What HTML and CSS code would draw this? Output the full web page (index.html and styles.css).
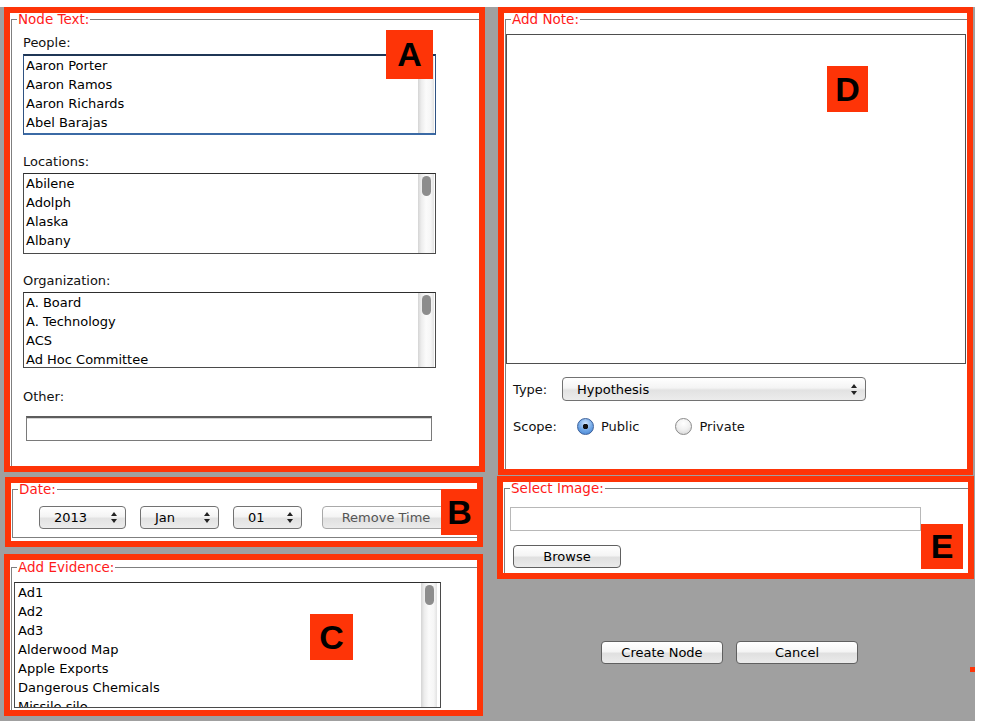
FILE: index.html
```html
<!DOCTYPE html>
<html>
<head>
<meta charset="utf-8">
<title>Create Node</title>
<link rel="stylesheet" href="styles.css">
</head>
<body>
<div class="screen">
  <div class="col-left">
    <section class="mark mark-a">
      <fieldset class="group">
        <legend>Node Text:</legend>
        <div class="lbl lbl-first">People:</div>
        <div class="list list-focus list-tall">
          <ul class="items">
            <li>Aaron Porter</li>
            <li>Aaron Ramos</li>
            <li>Aaron Richards</li>
            <li>Abel Barajas</li>
          </ul>
          <div class="sbar"><div class="thumb"></div></div>
        </div>
        <div class="lbl">Locations:</div>
        <div class="list list-tall">
          <ul class="items">
            <li>Abilene</li>
            <li>Adolph</li>
            <li>Alaska</li>
            <li>Albany</li>
          </ul>
          <div class="sbar"><div class="thumb"></div></div>
        </div>
        <div class="lbl">Organization:</div>
        <div class="list list-short">
          <ul class="items">
            <li>A. Board</li>
            <li>A. Technology</li>
            <li>ACS</li>
            <li>Ad Hoc Committee</li>
          </ul>
          <div class="sbar"><div class="thumb"></div></div>
        </div>
        <div class="lbl lbl-other">Other:</div>
        <div class="textfield textfield-other"></div>
      </fieldset>
    </section>

    <section class="mark mark-b">
      <fieldset class="group group-date">
        <legend>Date:</legend>
        <div class="date-row">
          <div class="combo combo-year"><span>2013</span><svg class="updown" viewBox="0 0 6 11" width="6" height="11"><path d="M3 0 L6 4 H0 Z M0 7 H6 L3 11 Z"/></svg></div>
          <div class="combo combo-month"><span>Jan</span><svg class="updown" viewBox="0 0 6 11" width="6" height="11"><path d="M3 0 L6 4 H0 Z M0 7 H6 L3 11 Z"/></svg></div>
          <div class="combo combo-day"><span>01</span><svg class="updown" viewBox="0 0 6 11" width="6" height="11"><path d="M3 0 L6 4 H0 Z M0 7 H6 L3 11 Z"/></svg></div>
          <div class="btn btn-disabled btn-remove">Remove Time</div>
        </div>
      </fieldset>
    </section>

    <section class="mark mark-c">
      <fieldset class="group group-evidence">
        <legend>Add Evidence:</legend>
        <div class="list list-evidence">
          <ul class="items">
            <li>Ad1</li>
            <li>Ad2</li>
            <li>Ad3</li>
            <li>Alderwood Map</li>
            <li>Apple Exports</li>
            <li>Dangerous Chemicals</li>
            <li>Missile silo</li>
          </ul>
          <div class="sbar"><div class="thumb"></div></div>
        </div>
      </fieldset>
    </section>
  </div>

  <div class="col-right">
    <section class="mark mark-d">
      <fieldset class="group">
        <legend>Add Note:</legend>
        <div class="textarea"></div>
        <div class="form-row row-type">
          <span class="row-lbl lbl-type">Type:</span>
          <div class="combo combo-type"><span>Hypothesis</span><svg class="updown" viewBox="0 0 6 11" width="6" height="11"><path d="M3 0 L6 4 H0 Z M0 7 H6 L3 11 Z"/></svg></div>
        </div>
        <div class="form-row row-scope">
          <span class="row-lbl lbl-scope">Scope:</span>
          <span class="radio radio-on"></span><span class="radio-text">Public</span>
          <span class="radio radio-off"></span><span class="radio-text">Private</span>
        </div>
      </fieldset>
    </section>

    <section class="mark mark-e">
      <fieldset class="group">
        <legend>Select Image:</legend>
        <div class="textfield textfield-image"></div>
        <div class="btn btn-browse">Browse</div>
      </fieldset>
    </section>

    <div class="actions">
      <div class="btn btn-action">Create Node</div>
      <div class="btn btn-action">Cancel</div>
    </div>
  </div>

  <div class="badge badge-a">A</div>
  <div class="badge badge-b">B</div>
  <div class="badge badge-c">C</div>
  <div class="badge badge-d">D</div>
  <div class="badge badge-e">E</div>
  <div class="speck"></div>
</div>
</body>
</html>
```

FILE: styles.css
```css
html, body {
  margin: 0;
  padding: 0;
  background: #ffffff;
}

body {
  font-family: "DejaVu Sans", "Noto Sans", sans-serif;
  font-size: 13px;
  color: #111;
}

.screen {
  position: relative;
  margin-top: 7px;
  width: 975px;
  height: 714px;
  background: #a0a0a0;
  display: flex;
  align-items: flex-start;
}

.col-left {
  margin-left: 4px;
  width: 481px;
  display: flex;
  flex-direction: column;
}

.col-right {
  margin-left: 12px;
  width: 477px;
  display: flex;
  flex-direction: column;
}

/* red annotation frames */
.mark {
  box-sizing: border-box;
  border: 6px solid #fe3407;
  background: #ffffff;
  overflow: hidden;
}

.mark-a { width: 481px; height: 465px; }
.mark-b { width: 478px; height: 70px; margin-top: 5px; margin-left: 1px; }
.mark-c { width: 479px; height: 162px; margin-top: 7px; }
.mark-d { width: 475px; height: 468px; margin-left: 1px; }
.mark-e { width: 477px; height: 103px; margin-top: 1px; }

/* titled border */
.group {
  margin: 0 -6px 0 1px;
  padding: 0;
  border: 1px solid #7f7f7f;
  min-width: 0;
  height: 600px;
}

.group legend {
  margin-left: 5px;
  padding: 0 1px;
  line-height: 12px;
  font-size: 13.5px;
  color: #ff1a1a;
}

.group-date {
  height: 53px;
}

.group-evidence {
  margin-top: 1px;
}

/* node text column */
.lbl {
  line-height: 16px;
  margin: 19px 0 3px 11px;
  color: #111;
}

.lbl-first { margin-top: 10px; }
.lbl-other { margin-top: 21px; margin-bottom: 11px; }

.list {
  box-sizing: border-box;
  display: flex;
  margin-left: 11px;
  width: 413px;
  border: 1px solid #4a4a4a;
  border-top-color: #2e2e2e;
  background: #fff;
  overflow: hidden;
}

.list-tall { height: 81px; }
.list-short { height: 76px; }

.list-focus {
  border-top: 2px solid #1f3656;
  border-left-color: #2f5282;
  border-right-color: #2f5282;
  border-bottom: 2px solid #3b6aa5;
}

.items {
  flex: 1;
  list-style: none;
  margin: 0;
  padding: 0 0 0 2px;
}

.items li {
  line-height: 19px;
  height: 19px;
  white-space: nowrap;
  color: #000;
}

.sbar {
  width: 16px;
  margin-right: 1px;
  flex: none;
  background: linear-gradient(to right, #d4d4d4 0%, #ececec 20%, #fbfbfb 50%, #f6f6f6 80%, #e2e2e2 100%);
  display: flex;
  justify-content: center;
}

.thumb {
  width: 9px;
  height: 20px;
  margin-top: 2px;
  border-radius: 5px;
  background: #8d8d8d;
}

.textfield {
  box-sizing: border-box;
  background: #fff;
}

.textfield-other {
  margin-left: 14px;
  width: 406px;
  height: 25px;
  border: 1px solid #7a7a7a;
  border-top: 2px solid #5d5d5d;
  box-shadow: inset 0 1px 0 #d6d6d6;
}

/* date row */
.date-row {
  display: flex;
  align-items: center;
  margin: 11px 0 0 26px;
}

.combo {
  box-sizing: border-box;
  height: 23px;
  display: flex;
  align-items: center;
  justify-content: space-between;
  padding: 0 8px 0 14px;
  border: 1px solid #727272;
  border-radius: 4px;
  background: linear-gradient(#ffffff 0%, #f4f4f4 45%, #e2e2e2 55%, #ececec 100%);
  color: #000;
  white-space: nowrap;
}

.updown {
  fill: #222;
  flex: none;
}

.combo-year { width: 87px; }
.combo-month { width: 79px; margin-left: 14px; }
.combo-day { width: 69px; margin-left: 14px; }

.btn {
  box-sizing: border-box;
  height: 23px;
  line-height: 21px;
  text-align: center;
  border: 1px solid #606060;
  border-radius: 4px;
  background: linear-gradient(#ffffff 0%, #f5f5f5 45%, #e0e0e0 55%, #ebebeb 100%);
  color: #000;
  white-space: nowrap;
}

.btn-disabled {
  border-color: #a9a9a9;
  color: #555;
}

.btn-remove {
  width: 128px;
  margin-left: 20px;
}

/* evidence */
.list-evidence {
  margin: 9px 0 0 2px;
  width: 427px;
  height: 126px;
}

.list-evidence .items {
  padding-left: 3px;
}

.list-evidence .sbar {
  margin-right: 3px;
}

/* note */
.textarea {
  box-sizing: border-box;
  margin-top: 9px;
  width: 460px;
  height: 330px;
  border: 1px solid #4e4e4e;
  background: #fff;
}

.form-row {
  display: flex;
  align-items: center;
  padding-left: 7px;
}

.row-type {
  margin-top: 13px;
}

.row-scope {
  margin-top: 16px;
  height: 18px;
}

.row-lbl {
  color: #111;
}

.lbl-type { width: 49px; }
.lbl-scope { width: 64px; }

.combo-type {
  width: 304px;
  height: 24px;
}

.radio {
  box-sizing: border-box;
  width: 17px;
  height: 17px;
  border-radius: 50%;
  flex: none;
}

.radio-on {
  border: 1px solid #3a5f9a;
  background: radial-gradient(circle, #111 0 2.5px, transparent 3px),
              radial-gradient(circle at 50% 30%, #cfe4fb 0%, #6fa6e6 55%, #3f7fd0 100%);
}

.radio-off {
  border: 1px solid #8a8a8a;
  background: radial-gradient(circle at 50% 30%, #ffffff 0%, #f0f0f0 50%, #cfcfcf 100%);
  margin-left: 36px;
}

.radio-text {
  margin-left: 7px;
  color: #111;
}

/* select image */
.textfield-image {
  margin: 13px 0 0 5px;
  width: 411px;
  height: 24px;
  border: 1px solid #b8b8b8;
}

.btn-browse {
  margin: 14px 0 0 8px;
  width: 108px;
}

/* action buttons */
.actions {
  display: flex;
  margin: 62px 0 0 104px;
}

.btn-action {
  width: 122px;
  margin-right: 13px;
}

/* letter badges */
.badge {
  position: absolute;
  background: #fe3407;
  color: #000;
  font-family: "Liberation Sans", Arial, sans-serif;
  font-weight: bold;
  font-size: 34px;
  display: flex;
  align-items: center;
  justify-content: center;
}

.badge-a { left: 386px; top: 23px; width: 47px; height: 49px; }
.badge-b { left: 441px; top: 482px; width: 37px; height: 46px; }
.badge-c { left: 310px; top: 607px; width: 43px; height: 46px; }
.badge-d { left: 827px; top: 59px; width: 41px; height: 46px; }
.badge-e { left: 921px; top: 517px; width: 42px; height: 45px; }

.speck {
  position: absolute;
  left: 970px;
  top: 660px;
  width: 5px;
  height: 5px;
  background: #fe3407;
}
```
